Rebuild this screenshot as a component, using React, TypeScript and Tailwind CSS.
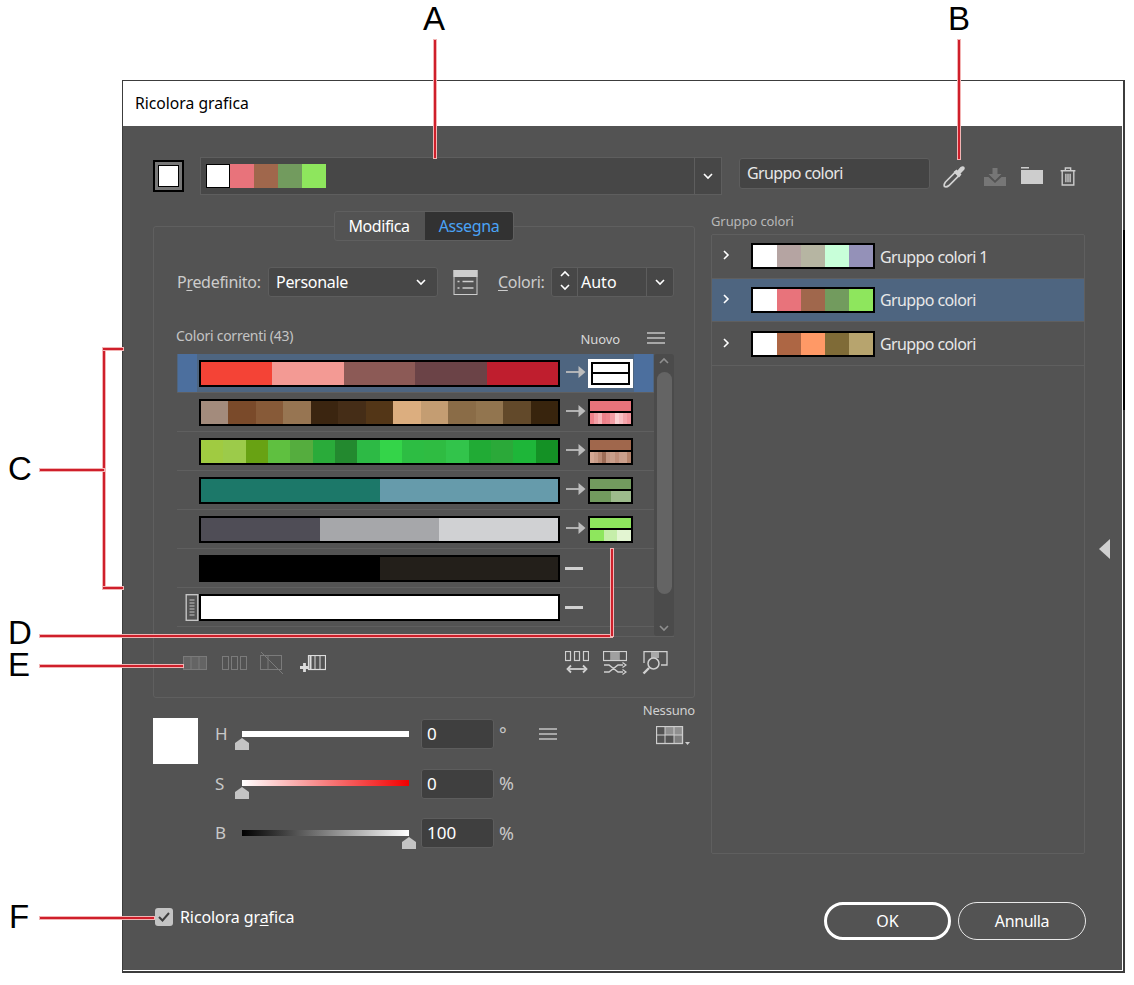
import React from "react";

const font = "[font-family:'Noto_Sans',sans-serif]";

function Chevron({ dir = "down", className = "" }: { dir?: "down" | "up" | "right"; className?: string }) {
  const d = dir === "down" ? "M1 1.5 L5 5.5 L9 1.5" : dir === "up" ? "M1 5.5 L5 1.5 L9 5.5" : "M1.5 1 L5.5 5 L1.5 9";
  return (
    <svg viewBox="0 0 10 10" className={`w-[10px] h-[10px] ${className}`} fill="none" stroke="currentColor" strokeWidth="1.6">
      <path d={d} transform={dir === "right" ? "translate(1.5 0)" : "translate(0 1.5)"} />
    </svg>
  );
}

function Burger({ className = "" }: { className?: string }) {
  return (
    <svg viewBox="0 0 18 12" className={`w-[18px] h-[12px] ${className}`} stroke="#c4c4c4" strokeWidth="1.5">
      <path d="M0 1h18M0 6h18M0 11h18" />
    </svg>
  );
}

function Strip({ colors, className = "" }: { colors: string[]; className?: string }) {
  return (
    <div className={`flex ${className}`}>
      {colors.map((c, i) => (
        <div key={i} className="flex-1 h-full" style={{ background: c }} />
      ))}
    </div>
  );
}

function Arrow() {
  return (
    <svg viewBox="0 0 20 12" className="w-[20px] h-[12px] -mt-[3px]">
      <path d="M0 6h14" stroke="#bdbdbd" strokeWidth="1.8" />
      <path d="M12.500 0 L19.500 6 L12.500 12 Z" fill="#bdbdbd" />
    </svg>
  );
}

function NewSwatch({ top, bottom, white }: { top: string; bottom: string[]; white?: boolean }) {
  if (white) {
    return (
      <div className="w-[45px] h-[29px] -my-[1px] border-[3px] border-white bg-white">
        <div className="h-full flex flex-col gap-[2px] border-2 border-black bg-black">
          <div className="flex-1 bg-white" />
          <div className="flex-1 bg-white" />
        </div>
      </div>
    );
  }
  return (
    <div className="w-[45px] h-[27px] flex flex-col gap-[2px] border-2 border-black bg-black">
      <div className="flex-1" style={{ background: top }} />
      <Strip colors={bottom} className="flex-1" />
    </div>
  );
}

const rows: { colors: string[]; top?: string; bottom?: string[]; white?: boolean }[] = [
  { colors: ["#f44336", "#f39a94", "#8c5a56", "#6b4347", "#bf1e2e"], top: "#ffffff", bottom: ["#ffffff"], white: true },
  {
    colors: ["#a38b7c", "#7a4a2a", "#875a38", "#977552", "#3b2510", "#452d17", "#533617", "#dcae7f", "#c49d72", "#8a6c47", "#92754f", "#62492a", "#38240d"],
    top: "#e8737b",
    bottom: ["#ee8189", "#f29ea4", "#f7b5b8", "#ec7f88", "#ee858d", "#f29ea4", "#fbd2d3", "#f8bfc3", "#f4a5ab", "#f2949c"],
  },
  {
    colors: ["#a0cb41", "#9ccb4a", "#68a213", "#5fc040", "#55ad3e", "#2aab3a", "#23892f", "#2dba45", "#34d449", "#2dbd43", "#2fbc42", "#32c44b", "#21ab35", "#2ba939", "#1eb639", "#149125"],
    top: "#a0674c",
    bottom: ["#d3a793", "#c89c88", "#b98a74", "#9d6c56", "#c39783", "#ca9f8b", "#c08f7a", "#c99e8b", "#ca9f8b", "#b5836b"],
  },
  { colors: ["#1c7869", "#669bab"], top: "#729b5e", bottom: ["#729b5e", "#9dbb8c"] },
  { colors: ["#4f4d56", "#a6a7aa", "#d0d1d3"], top: "#8ee65d", bottom: ["#8ee65d", "#c6eeaa", "#e3f5d2"] },
  { colors: ["#000000", "#231f1a"] },
  { colors: ["#ffffff"] },
];

const groups = [
  { name: "Gruppo colori 1", colors: ["#ffffff", "#b5a4a2", "#b6b5a2", "#c8ffd9", "#9491b8"] },
  { name: "Gruppo colori", colors: ["#ffffff", "#e8737b", "#a0674c", "#729b5e", "#8ee65d"], selected: true },
  { name: "Gruppo colori", colors: ["#ffffff", "#ad6644", "#ff9966", "#7f6b37", "#b7a46e"] },
];

function Leader({ className }: { className: string }) {
  return <div className={`absolute bg-[#cf1f2b] outline outline-1 outline-[#f2b4b4] ${className}`} />;
}

function Letter({ children, className }: { children: React.ReactNode; className: string }) {
  return <div className={`absolute text-[33px] leading-[26px] text-black font-['Liberation_Sans',sans-serif] ${className}`}>{children}</div>;
}

function SliderRow({ label, track, value, unit, thumbRight, extra }: { label: string; track: string; value: string; unit: string; thumbRight?: boolean; extra?: React.ReactNode }) {
  return (
    <div className="flex items-center h-[30px]">
      <div className="w-[27px] text-[17px] text-[#c8c8c8]">{label}</div>
      <div className="relative w-[167px] h-[6px] -mt-[1px]" style={{ background: track }}>
        <svg viewBox="0 0 14 12" className={`absolute top-[7px] w-[14px] h-[12px] ${thumbRight ? "right-[-7px]" : "left-[-7px]"}`}>
          <path d="M7 0 L14 5 V12 H0 V5 Z" fill="#c4c4c4" />
        </svg>
      </div>
      <div className="ml-[12px] w-[73px] h-[30px] bg-[#3f3f3f] border border-[#5d5d5d] rounded-[3px] flex items-center pl-[5px] text-[17px] text-white">{value}</div>
      <div className="ml-[5px] w-[20px] text-[18px] text-[#c8c8c8]">{unit}</div>
      {extra}
    </div>
  );
}

export default function App() {
  return (
    <div className={`relative w-[1134px] h-[985px] bg-white overflow-hidden pt-[80px] pl-[122px] ${font}`}>
      <div className="w-[1003px] h-[893px] border-l border-t border-[#3c3c3c] border-b-[2px] border-r-[2px] bg-white flex flex-col pr-[1px] pb-[1px]">
        <div className="h-[45px] shrink-0 pl-[12px] flex items-center text-[15.700px] text-black tracking-[0px]">Ricolora grafica</div>
        <div className="flex-1 bg-[#535353] pt-[31px] pl-[30px] pr-[36px] flex flex-col text-white">
          {/* top row */}
          <div className="flex items-center h-[37px]">
            <div className="w-[31px] h-[32px] border-2 border-black bg-[#777] p-[3px]">
              <div className="w-full h-full bg-white border border-black" />
            </div>
            <div className="ml-[16px] w-[522px] h-[38px] bg-[#474747] border border-[#5e5e5e] flex items-center">
              <div className="flex-1 flex items-center pl-[5px]">
                <div className="w-[24px] h-[24px] bg-white border border-black" />
                <Strip colors={["#e8737b", "#a0674c", "#729b5e", "#8ee65d"]} className="w-[96px] h-[24px]" />
              </div>
              <div className="w-[27px] h-full border-l border-[#5e5e5e] flex items-center justify-center text-white">
                <Chevron />
              </div>
            </div>
            <div className="ml-[17px] w-[191px] h-[31px] -mt-[5px] bg-[#444] border border-[#5d5d5d] rounded-[3px] flex items-center pl-[7px] text-[16px] text-[#e8e8e8] tracking-[-0.6px]">Gruppo colori</div>
            <div className="flex items-center ml-[12px]">
              <svg viewBox="0 0 24 24" className="w-[24px] h-[24px] mt-[3px]" fill="none">
                <path d="M13.500 7 L17 10.500 L7 20.500 Q4.500 22.500 2.500 21.500 Q1.500 19.500 3.500 17 Z" stroke="#d2d2d2" strokeWidth="1.700" />
                <path d="M11.500 7 L14.500 4.500 L15.500 5.500 L18.500 2 Q21 0.500 22.500 2 Q23.500 4 21.500 5.500 L18.500 8.500 L19.500 9.500 L17 12.500 Z" fill="#d2d2d2" />
              </svg>
              <svg viewBox="0 0 22 18" className="ml-[18px] w-[22px] h-[18px] mt-[3px]">
                <path d="M8.500 0h5v6h4l-6.500 6.500L4.500 6h4z" fill="#767676" />
                <path d="M0 9h4.500l6.500 6 6.500-6H22v9H0z" fill="#767676" />
              </svg>
              <svg viewBox="0 0 22 17" className="ml-[15px] w-[22px] h-[17px]">
                <path d="M0 0h8v1.500H0zM0 3h22v14H0z" fill="#cdcdcd" />
              </svg>
              <svg viewBox="0 0 16 18" className="ml-[16px] w-[18px] h-[19px] mt-[2px]" fill="none" stroke="#cdcdcd" strokeWidth="1.300">
                <path d="M1 3.500h14M5.500 3.500V1h5v2.500M2.500 3.500 V17h11V3.500M6 6.500v8M8 6.500v8M10 6.500v8" />
              </svg>
            </div>
          </div>

          {/* main row */}
          <div className="flex flex-1">
            {/* left */}
            <div className="w-[542px] flex flex-col">
              <div className="mt-[32px] h-[472px] border border-[#5f5f5f] rounded-[3px] flex flex-col">
                <div className="self-center -mt-[16px] flex h-[30px] w-[180px] border border-[#5f5f5f] rounded-[3px] bg-[#535353] text-[16px] tracking-[-0.4px]">
                  <div className="w-[90px] flex items-center justify-center text-white pr-[2px]">Modifica</div>
                  <div className="flex-1 flex items-center justify-center bg-[#323232] text-[#4aa3f5] rounded-r-[3px]">Assegna</div>
                </div>
                {/* preset row */}
                <div className="mt-[26px] flex items-center h-[30px] pl-[23px] text-[16px] tracking-[-0.3px]">
                  <span className="w-[91px] text-[#cccccc]">P<span className="underline underline-offset-2">r</span>edefinito:</span>
                  <div className="w-[170px] h-[30px] bg-[#474747] border border-[#5d5d5d] rounded-[3px] flex items-center justify-between pl-[7px] pr-[11px] text-white">
                    Personale
                    <Chevron />
                  </div>
                  <svg viewBox="0 0 24 25" className="ml-[15px] w-[25px] h-[25px]">
                    <rect x="0.500" y="0.500" width="23" height="24" fill="none" stroke="#cdcdcd" />
                    <rect x="0" y="0" width="24" height="7" fill="#cdcdcd" />
                    <path d="M4 11.500h2M9 11.500h11M4 18h2M9 18h11" stroke="#cdcdcd" strokeWidth="1.500" />
                  </svg>
                  <span className="ml-[20px] w-[53px] text-[#cccccc]"><span className="underline underline-offset-2">C</span>olori:</span>
                  <div className="w-[123px] h-[30px] bg-[#474747] border border-[#5d5d5d] rounded-[3px] flex items-center text-white">
                    <div className="w-[26px] h-full border-r border-[#5d5d5d] flex flex-col items-center justify-center gap-[3px]">
                      <Chevron dir="up" className="-mt-[3px]" />
                      <Chevron dir="down" />
                    </div>
                    <div className="flex-1 pl-[3px] tracking-normal">Auto</div>
                    <div className="w-[27px] h-full border-l border-[#5d5d5d] flex items-center justify-center"><Chevron /></div>
                  </div>
                </div>
                {/* header */}
                <div className="mt-[26px] h-[31px] flex items-start pl-[22px] pr-[29px]">
                  <span className="text-[14px] text-[#c4c4c4] tracking-[-0.25px] leading-[26px]">Colori correnti (43)</span>
                  <span className="ml-auto text-[13px] text-[#d8d8d8] tracking-[-0.1px] leading-[32px]">Nuovo</span>
                  <Burger className="ml-[27px] mt-[9px]" />
                </div>
                {/* list */}
                <div className="ml-[23px] w-[497px] h-[283px] flex border-b border-[#5f5f5f]">
                  <div className="w-[477px]">
                    {rows.map((r, i) => (
                      <div key={i} className={`relative h-[39px] flex items-center pl-[22px] border-b border-[#5f5f5f] ${i === 0 ? "bg-[#4e6580]" : ""}`}>
                        {i === 0 && <div className="absolute left-[1px] top-0 w-[19px] h-full bg-[#4c6f9e]" />}
                        {i === 0 && <div className="absolute right-[1px] top-0 w-[19px] h-full bg-[#4c6f9e]" />}
                        {i === 6 && (
                          <svg viewBox="0 0 13 27" className="absolute left-[8px] top-[6px] w-[14px] h-[27px]" fill="none" stroke="#c4c4c4">
                            <rect x="0.700" y="0.700" width="11.600" height="25.600" strokeWidth="1.400" />
                            <path d="M4 6h5M4 9h5M4 12h5M4 15h5M4 18h5M4 21h5" />
                          </svg>
                        )}
                        <Strip colors={r.colors} className="relative w-[361px] h-[27px] border-2 border-black" />
                        {r.top ? (
                          <div className="relative ml-[6px] flex items-center gap-[2px]">
                            <Arrow />
                            <NewSwatch top={r.top} bottom={r.bottom!} white={r.white} />
                          </div>
                        ) : (
                          <div className="ml-[5px] w-[18px] h-[3px] bg-[#d0d0d0]" />
                        )}
                      </div>
                    ))}
                  </div>
                  <div className="relative w-[20px] bg-[#4b4b4b] rounded-[3px] flex flex-col items-center text-[#8f8f8f]">
                    <Chevron dir="up" className="mt-[2px]" />
                    <div className="mt-[6px] w-[15px] h-[222px] rounded-full bg-[#646464]" />
                    <Chevron dir="down" className="mt-auto mb-[3px]" />
                  </div>
                </div>
                {/* toolbar */}
                <div className="mt-[13px] flex items-center h-[26px] pl-[29px] pr-[26px]">
                  <svg viewBox="0 0 24 14" className="w-[24px] h-[14px]" fill="none" stroke="#7a7a7a">
                    <rect x="0" y="0" width="24" height="14" fill="#646464" stroke="none" />
                    <rect x="0.500" y="0.500" width="23" height="13" />
                    <path d="M8 0v14M16 0v14" />
                  </svg>
                  <svg viewBox="0 0 25 14" className="ml-[15px] w-[25px] h-[14px]" fill="none" stroke="#7b7b7b"><rect x="0.500" y="0.500" width="6" height="13" /><rect x="9.500" y="0.500" width="6" height="13" /><rect x="18.500" y="0.500" width="6" height="13" /></svg>
                  <svg viewBox="0 0 24 22" className="ml-[13px] w-[24px] h-[22px]" fill="none" stroke="#7b7b7b"><rect x="0.500" y="3.500" width="21" height="14" /><path d="M1 0 L23 22M8 3v15" /></svg>
                  <svg viewBox="0 0 26 17" className="ml-[16px] w-[26px] h-[17px]" fill="none" stroke="#dcdcdc">
                    <rect x="8.500" y="0.500" width="17" height="14" strokeWidth="1.200" />
                    <path d="M10.500 0v14" strokeWidth="2" />
                    <path d="M15 0v14M20 0v14" />
                    <path d="M4.500 8v9M0 12.500h9" strokeWidth="2.800" />
                  </svg>
                  <svg viewBox="0 0 24 24" className="ml-auto w-[24px] h-[24px]" fill="none" stroke="#d0d0d0">
                    <rect x="0.500" y="0.500" width="5" height="9" strokeWidth="1.200" />
                    <rect x="9.500" y="0.500" width="5" height="9" strokeWidth="1.200" />
                    <rect x="18.500" y="0.500" width="5" height="9" strokeWidth="1.200" />
                    <path d="M4 18h16" strokeWidth="1.800" />
                    <path d="M6 14.500 L2.500 18 L6 21.500M18 14.500 L21.500 18 L18 21.500" strokeWidth="1.800" />
                  </svg>
                  <svg viewBox="0 0 24 24" className="ml-[14px] w-[24px] h-[24px]" fill="none" stroke="#d0d0d0">
                    <rect x="0.500" y="0.500" width="23" height="9" strokeWidth="1.200" />
                    <path d="M8 0v10M16 0v10" />
                    <rect x="8" y="1" width="8" height="8" fill="#a0a0a0" stroke="none" />
                    <path d="M1 14h5l9 7h5M1 21h5l9-7h5" strokeWidth="1.500" />
                    <path d="M19.500 11.500 L23 14 L19.500 16.500M19.500 18.500 L23 21 L19.500 23.500" strokeWidth="1.300" />
                  </svg>
                  <svg viewBox="0 0 27 24" className="ml-[14px] w-[27px] h-[24px]" fill="none" stroke="#d0d0d0">
                    <path d="M3 12V0.700h23v13.300h-6" strokeWidth="1.300" />
                    <rect x="10" y="1" width="8" height="6" fill="#a8a8a8" stroke="none" />
                    <circle cx="12.500" cy="12.500" r="5.500" strokeWidth="1.500" />
                    <path d="M8 17 L2.500 22.500" strokeWidth="2.400" />
                  </svg>
                </div>
              </div>

              {/* HSB */}
              <div className="relative mt-[20px] flex">
                <div className="w-[45px] h-[46px] bg-white" />
                <div className="ml-[17px] mt-[1px] flex flex-col gap-[19.500px]">
                  <SliderRow label="H" track="#ffffff" value="0" unit="°" extra={<Burger className="ml-[20px]" />} />
                  <SliderRow label="S" track="linear-gradient(to right,#ffffff,#f10000)" value="0" unit="%" />
                  <SliderRow label="B" track="linear-gradient(to right,#000000,#ffffff)" value="100" unit="%" thumbRight />
                </div>
                <div className="absolute right-0 -top-[17px] flex flex-col items-end">
                  <span className="text-[13px] text-[#d0d0d0] tracking-[-0.2px] leading-[18px]">Nessuno</span>
                  <svg viewBox="0 0 34 19" className="mt-[7px] mr-[5px] w-[34px] h-[19px]" fill="none" stroke="#cdcdcd">
                    <rect x="9" y="1" width="17" height="8" fill="#8f8f8f" stroke="none" />
                    <rect x="18" y="9" width="8" height="8" fill="#7e7e7e" stroke="none" />
                    <rect x="0.500" y="0.500" width="26" height="17" strokeWidth="1.300" />
                    <path d="M9 0v18M18 0v18M0 9h27" />
                    <path d="M29 16h5l-2.500 3z" fill="#cdcdcd" stroke="none" />
                  </svg>
                </div>
              </div>
            </div>

            {/* right */}
            <div className="ml-[16px] w-[374px] flex flex-col">
              <div className="mt-[17px] h-[23px] text-[13px] text-[#b8b8b8] tracking-[-0.1px] leading-[20px]">Gruppo colori</div>
              <div className="h-[620px] border border-[#5f5f5f] rounded-[2px]">
                {groups.map((g, i) => (
                  <div key={i} className={`h-[43.670px] flex items-center pl-[9px] border-b border-[#5f5f5f] ${g.selected ? "bg-[#4e6580] border-[#4e6580]" : ""}`}>
                    <Chevron dir="right" className="text-white -mt-[2px]" />
                    <Strip colors={g.colors} className="ml-[20px] w-[124px] h-[26px] border-2 border-black" />
                    <span className="ml-[5px] mt-[1px] text-[16px] text-[#e8e8e8] tracking-[-0.6px]">{g.name}</span>
                  </div>
                ))}
              </div>
            </div>

            <div className="flex-1 flex items-start justify-end -mr-[24px]">
              <div className="mt-[345px] w-0 h-0 border-y-[10px] border-y-transparent border-r-[11px] border-r-[#d0d0d0]" />
            </div>
          </div>

          {/* bottom row */}
          <div className="flex items-center h-[38px] mb-[30px]">
            <div className="ml-[2px] -mt-[9px] w-[18px] h-[18px] rounded-[3px] bg-[#c4c4c4] flex items-center justify-center">
              <svg viewBox="0 0 12 10" className="w-[12px] h-[10px]" fill="none" stroke="#3f3f3f" strokeWidth="2"><path d="M1 5 L4.500 8.500 L11 1" /></svg>
            </div>
            <span className="ml-[7px] -mt-[8px] text-[16px] text-white tracking-[-0.1px]">Ricolora gr<span className="underline underline-offset-2">a</span>fica</span>
            <div className="ml-auto w-[127px] h-[38px] border-[3px] border-white rounded-full flex items-center justify-center text-[16px]">OK</div>
            <div className="ml-[7px] w-[128px] h-[38px] border-[1.500px] border-[#e8e8e8] rounded-full flex items-center justify-center text-[16px] tracking-[-0.4px]">Annulla</div>
          </div>
        </div>
      </div>

      {/* edge fragment of the window behind */}
      <div className="absolute left-[1123px] top-[230px] w-[2px] h-[180px] bg-black" />

      {/* callouts */}
      <Letter className="left-[423px] top-[6px]">A</Letter>
      <Letter className="left-[948px] top-[6px]">B</Letter>
      <Letter className="left-[8px] top-[456px]">C</Letter>
      <Letter className="left-[8px] top-[620px]">D</Letter>
      <Letter className="left-[8px] top-[652px]">E</Letter>
      <Letter className="left-[9px] top-[904px]">F</Letter>
      <Leader className="left-[434px] top-[40px] w-[2px] h-[118px]" />
      <Leader className="left-[958px] top-[40px] w-[2px] h-[119px]" />
      <Leader className="left-[103px] top-[348px] w-[2px] h-[241px]" />
      <Leader className="left-[103px] top-[348px] w-[20px] h-[2px]" />
      <Leader className="left-[103px] top-[587px] w-[20px] h-[2px]" />
      <Leader className="left-[40px] top-[469px] w-[64px] h-[2px]" />
      <Leader className="left-[40px] top-[635px] w-[572px] h-[2px]" />
      <Leader className="left-[611px] top-[549px] w-[2px] h-[87px]" />
      <Leader className="left-[40px] top-[665px] w-[143px] h-[2px]" />
      <Leader className="left-[40px] top-[917px] w-[114px] h-[2px]" />
    </div>
  );
}
